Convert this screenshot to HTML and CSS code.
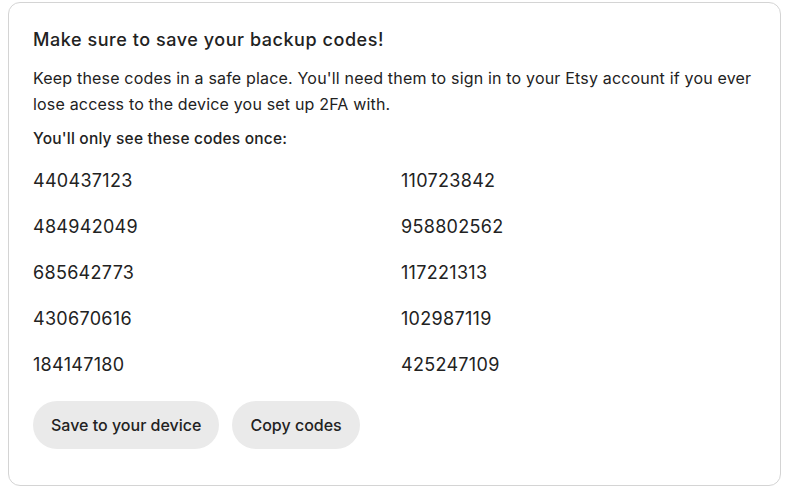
FILE: index.html
```html
<!DOCTYPE html>
<html lang="en">
<head>
<meta charset="utf-8">
<title>Backup codes</title>
<link rel="stylesheet" href="styles.css">
</head>
<body>
<section class="card">
  <h2 class="title">Make sure to save your backup codes!</h2>
  <p class="desc">Keep these codes in a safe place. You'll need them to sign in to your Etsy account if you ever lose access to the device you set up 2FA with.</p>
  <p class="once">You'll only see these codes once:</p>
  <ul class="codes">
    <li>440437123</li>
    <li>110723842</li>
    <li>484942049</li>
    <li>958802562</li>
    <li>685642773</li>
    <li>117221313</li>
    <li>430670616</li>
    <li>102987119</li>
    <li>184147180</li>
    <li>425247109</li>
  </ul>
  <div class="actions">
    <button class="btn" type="button">Save to your device</button>
    <button class="btn" type="button">Copy codes</button>
  </div>
</section>
</body>
</html>
```

FILE: styles.css
```css
* { box-sizing: border-box; }
html, body { background: #ffffff; }
body {
  margin: 0;
  padding: 2px 6px 2px 8px;
  font-family: Inter, "Noto Sans", "Liberation Sans", sans-serif;
  color: #222222;
}
.card {
  border: 1px solid #d4d4d4;
  border-radius: 12px;
  padding: 25px 24px 35px 24px;
  height: 484px;
}
.title {
  margin: 0;
  font-size: 18px;
  line-height: 24px;
  font-weight: 500;
  letter-spacing: 0.55px;
}
.desc {
  margin: 13px 0 0;
  font-size: 16px;
  line-height: 26px;
  font-weight: 400;
  letter-spacing: 0.18px;
}
.once {
  margin: 11px 0 0;
  font-size: 15.5px;
  line-height: 22px;
  font-weight: 500;
  letter-spacing: 0.2px;
}
.codes {
  list-style: none;
  margin: 17px 0 0;
  padding: 0;
  display: grid;
  grid-template-columns: 1fr 1fr;
  column-gap: 13px;
  row-gap: 18px;
}
.codes li {
  font-size: 18px;
  line-height: 28px;
  font-weight: 400;
  letter-spacing: 0.3px;
}
.actions {
  display: flex;
  gap: 13px;
  margin-top: 22px;
}
.btn {
  font-family: inherit;
  font-size: 16px;
  font-weight: 500;
  letter-spacing: 0;
  color: #222222;
  background: #eaeaea;
  border: none;
  border-radius: 24px;
  height: 48px;
  padding: 0 18px;
}
```
